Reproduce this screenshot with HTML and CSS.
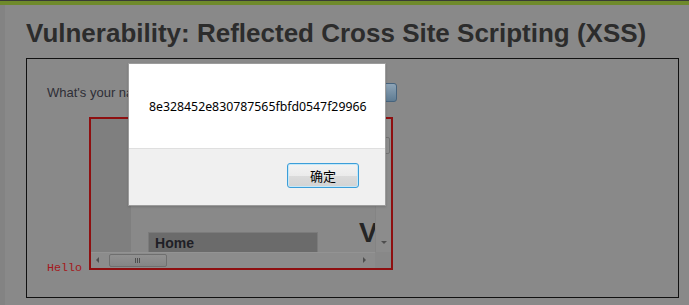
FILE: index.html
```html
<!DOCTYPE html>
<html lang="en">
    <head>
        <meta charset="UTF-8" />
        <title>Vulnerability: Reflected Cross Site Scripting (XSS)</title>
        <link rel="stylesheet" href="styles.css">
    </head>
    <body>
        <div class="top-bar"></div>
        <div class="page">
            <h1 class="main-head">Vulnerability: Reflected Cross Site Scripting (XSS)</h1>
            <div class="vuln-box">
                <form class="name-form">
                    <span class="name-label">What's your name?</span>
                    <span class="name-input"></span>
                    <button type="button" class="name-submit">Submit</button>
                </form>
                <pre class="result">Hello <div class="frame"><div class="frame-grid"><div class="frame-view"><div class="frame-side"></div><div class="frame-page"><div class="frame-menu">Home</div><div class="frame-title">Vulnerability</div></div></div><div class="vscroll"><span class="vscroll-thumb"></span><span class="arrow-down"></span></div><div class="hscroll"><span class="arrow-left"></span><span class="hscroll-thumb"><span class="grip"></span></span><span class="arrow-right"></span></div><div class="corner"></div></div></div></pre>
            </div>
        </div>

        <div class="alert-box">
            <div class="alert-body">8e328452e830787565fbfd0547f29966</div>
            <div class="alert-foot">
                <button type="button" class="alert-ok">确定</button>
            </div>
        </div>
    </body>
</html>
```

FILE: styles.css
```css
html,
body,
h1,
pre,
form {
    padding: 0;
    margin: 0;
}
body {
    background-color: #898989;
    font-family: "Liberation Sans", Arial, sans-serif;
    height: 305px;
    overflow: hidden;
}

.top-bar {
    height: 4px;
    border-top: 1px solid #3a3b36;
    background-color: #6f8a2b;
}

.page {
    border-left: 5px solid #838383;
    height: 300px;
    padding-left: 21px;
}

.main-head {
    font-size: 26px;
    line-height: 30px;
    font-weight: bold;
    color: #2c2c2c;
    padding-top: 13px;
    margin-bottom: 10px;
    white-space: nowrap;
}

.vuln-box {
    width: 631px;
    border: 1px solid #111;
    padding: 22px 0 22px 20px;
    box-sizing: content-box;
}

.name-form {
    display: flex;
    align-items: center;
    height: 22px;
    font-size: 13px;
    color: #2e2e36;
}
.name-input {
    width: 180px;
    height: 18px;
    margin-left: 6px;
    background-color: #8f8f8f;
    border: 1px solid #6a6a6a;
}
.name-submit {
    margin-left: 10px;
    width: 40px;
    height: 19px;
    border: 1px solid #46637d;
    border-radius: 3px;
    background: linear-gradient(#8ea4b6, #5f7c93);
    color: transparent;
    font-size: 11px;
    padding: 0;
}

.result {
    margin-top: 14px;
    font-family: "Liberation Mono", "Courier New", monospace;
    font-size: 11.7px;
    color: #a5181b;
    line-height: 1;
}

.frame {
    display: inline-block;
    overflow: hidden;
    border: 2px solid #8e0f10;
    margin-bottom: 1px;
    vertical-align: baseline;
    font-family: "Liberation Sans", Arial, sans-serif;
}
.frame-grid {
    display: grid;
    grid-template-columns: 284px 16px;
    grid-template-rows: 133px 16px;
    width: 300px;
    height: 149px;
}
.frame-view {
    display: flex;
    overflow: hidden;
}
.frame-side {
    width: 40px;
    flex: none;
    background-color: #7f7f7f;
}
.frame-page {
    flex: 1;
    display: flex;
    align-items: flex-start;
    background-color: #898989;
    overflow: hidden;
}
.frame-menu {
    flex: none;
    width: 162px;
    height: 30px;
    margin: 113px 0 0 17px;
    padding-left: 6px;
    background-color: #6b6b6b;
    border: 1px solid #7b7b7b;
    color: #1f1f26;
    font-size: 14px;
    font-weight: bold;
    line-height: 20px;
}
.frame-title {
    flex: none;
    margin: 98px 0 0 41px;
    font-size: 28px;
    line-height: 32px;
    font-weight: bold;
    color: #252525;
}

.vscroll {
    position: relative;
    background-color: #8c8c8c;
    border-left: 1px solid #848484;
}
.vscroll-thumb {
    position: absolute;
    left: 2px;
    right: 1px;
    top: 18px;
    height: 15px;
    border: 1px solid #727272;
    border-radius: 2px;
    background-color: #8e8e8e;
}
.arrow-down {
    position: absolute;
    left: 5px;
    top: 122px;
    border-left: 3px solid transparent;
    border-right: 3px solid transparent;
    border-top: 3px solid #4e4e4e;
}

.hscroll {
    position: relative;
    background-color: #8c8c8c;
    border-top: 1px solid #939393;
}
.arrow-left,
.arrow-right {
    position: absolute;
    top: 4px;
    border-top: 3px solid transparent;
    border-bottom: 3px solid transparent;
}
.arrow-left {
    left: 5px;
    border-right: 3px solid #4e4e4e;
}
.arrow-right {
    left: 272px;
    border-left: 3px solid #4e4e4e;
}
.hscroll-thumb {
    position: absolute;
    left: 18px;
    top: 1px;
    width: 56px;
    height: 11px;
    border: 1px solid #6f6f6f;
    border-radius: 2px;
    background: linear-gradient(#919191, #858585);
}
.grip {
    position: absolute;
    left: 25px;
    top: 3px;
    width: 5px;
    height: 5px;
    background: repeating-linear-gradient(90deg, #4f4f4f 0 1px, transparent 1px 2px);
}
.corner {
    background-color: #888;
}

.alert-box {
    position: absolute;
    left: 128px;
    top: 63px;
    width: 256px;
    height: 141px;
    background-color: #fff;
    border: 1px solid #9c9c9c;
    box-shadow: 0 1px 2px rgba(0, 0, 0, 0.15);
    display: flex;
    flex-flow: column;
    font-family: "Noto Sans", "Noto Sans CJK SC", sans-serif;
}
.alert-body {
    height: 84px;
    padding: 0 0 0 20px;
    display: flex;
    align-items: center;
    font-size: 12.3px;
    color: #000;
    border-bottom: 1px solid #dfdfdf;
}
.alert-foot {
    flex: 1;
    background-color: #f0f0f0;
    display: flex;
    justify-content: flex-end;
    align-items: flex-start;
    padding: 14px 26px 0 0;
}
.alert-ok {
    width: 72px;
    height: 25px;
    border: 1px solid #3c9ed9;
    border-radius: 3px;
    box-shadow: inset 0 0 0 1px #c5e8f8;
    background: linear-gradient(#f3f3f3 0, #ebebeb 50%, #dbdbdb 51%, #d3d3d3 100%);
    font-family: "Noto Sans CJK SC", sans-serif;
    font-size: 13px;
    color: #000;
    padding: 0;
}
```
